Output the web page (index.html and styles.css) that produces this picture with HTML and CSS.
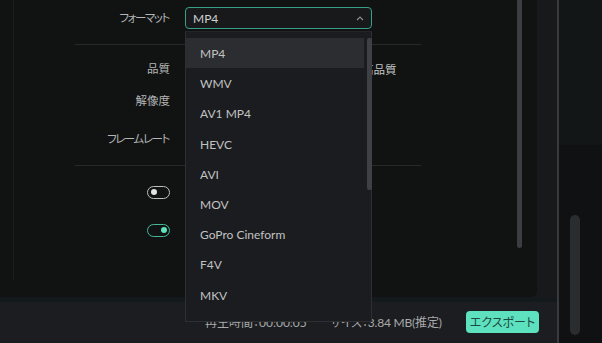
FILE: index.html
```html
<!DOCTYPE html>
<html lang="ja">
<head>
<meta charset="utf-8">
<link rel="stylesheet" href="styles.css">
</head>
<body>
<div class="app">
  <div class="main">
    <div class="panel">
      <div class="guide"></div>
      <div class="form">
        <div class="row row-format">
          <div class="label kana">フォーマット</div>
          <div class="select">
            <span>MP4</span>
            <svg class="chev" width="8" height="5" viewBox="0 0 8 5"><path d="M1 4 L4 1 L7 4" fill="none" stroke="#8a8c8e" stroke-width="1.2"/></svg>
          </div>
        </div>
        <div class="divider d1"></div>
        <div class="row r-quality">
          <div class="label">品質</div>
          <div class="value">高品質</div>
        </div>
        <div class="row r-res">
          <div class="label">解像度</div>
        </div>
        <div class="row r-fps">
          <div class="label kana">フレームレート</div>
        </div>
        <div class="divider d2"></div>
        <div class="row r-t1">
          <div class="label"><span class="toggle off"><i></i></span></div>
        </div>
        <div class="row r-t2">
          <div class="label"><span class="toggle on"><i></i></span></div>
        </div>
      </div>
      <div class="vscroll"></div>
    </div>
    <div class="footer">
      <span class="f-time">再生時間：00:00:05</span>
      <span class="f-size">サイズ：3.84 MB(推定)</span>
      <button class="export">エクスポート</button>
    </div>
    <div class="dropdown">
      <ul>
        <li class="sel">MP4</li>
        <li>WMV</li>
        <li>AV1 MP4</li>
        <li>HEVC</li>
        <li>AVI</li>
        <li>MOV</li>
        <li>GoPro Cineform</li>
        <li>F4V</li>
        <li>MKV</li>
      </ul>
      <div class="dd-scroll"></div>
    </div>
  </div>
  <div class="edge"></div>
  <div class="side">
    <div class="side-top"></div>
    <div class="side-thumb"></div>
  </div>
</div>
</body>
</html>
```
FILE: styles.css
```css
* { box-sizing: border-box; }
html, body { margin: 0; padding: 0; }
body {
  width: 602px;
  height: 343px;
  overflow: hidden;
  background: #111415;
  font-family: Lato, "Noto Sans CJK JP", sans-serif;
  font-feature-settings: "palt";
  font-size: 12px;
  color: #b8b9ba;
}
.app { display: flex; height: 343px; }
.main {
  position: relative;
  width: 557px;
  display: flex;
  flex-direction: column;
  background: #17191a;
}
.panel {
  position: relative;
  width: 537px;
  height: 297px;
  background: #111313;
  border-bottom-right-radius: 6px;
}
.guide {
  position: absolute;
  left: 13px;
  top: 0;
  width: 1px;
  height: 280px;
  background: #1a1c1d;
}
.form { padding-top: 4px; }
.row { display: flex; align-items: center; height: 28px; }
.label {
  width: 170px;
  text-align: right;
  color: #b4b5b6;
  font-size: 11.5px;
  line-height: 1;
  display: flex;
  justify-content: flex-end;
  align-items: center;
}
.label.kana { letter-spacing: -1.4px; padding-right: 1px; }
.select {
  margin-left: 15px;
  width: 187px;
  height: 22px;
  border: 1px solid #3a9f87;
  border-radius: 4px;
  background: #17191b;
  display: flex;
  align-items: center;
  justify-content: space-between;
  padding: 0 7px 0 7px;
  color: #cfd0d1;
}
.chev { display: block; }
.divider { margin-left: 75px; width: 346px; height: 1px; background: #26282a; }
.d1 { margin-top: 12px; }
.r-quality { margin-top: 10px; }
.value { margin-left: 192px; color: #c4c5c6; font-size: 11.5px; }
.r-res { margin-top: 4px; }
.r-fps { margin-top: 10px; }
.d2 { margin-top: 12px; }
.r-t1 { margin-top: 12px; }
.r-t2 { margin-top: 10px; }
.toggle {
  position: relative;
  display: block;
  width: 23px;
  height: 13px;
  border-radius: 7px;
  border: 1.5px solid #bdbebf;
}
.toggle i {
  position: absolute;
  top: 2px;
  width: 6px;
  height: 6px;
  border-radius: 50%;
}
.toggle.off i { left: 2.5px; background: #e2e3e4; }
.toggle.on { border-color: #45b89a; }
.toggle.on i { right: 2.5px; background: #5fe3bf; }
.vscroll {
  position: absolute;
  left: 517px;
  top: 0;
  width: 5px;
  height: 248px;
  background: #3a3e41;
  border-radius: 0 0 3px 3px;
}
.footer {
  flex: 1;
  display: flex;
  align-items: center;
  background: #1c1d20;
  border-top: 5px solid #14191b;
  padding-left: 205px;
  padding-bottom: 2px;
  color: #a9aaab;
}
.f-time { width: 125px; }
.f-size { letter-spacing: -0.2px; }
.export {
  margin-left: auto;
  margin-right: 18px;
  width: 73px;
  height: 22px;
  border: 0;
  border-radius: 4px;
  background: #5de1bf;
  color: #1d4a40;
  font-family: "Noto Sans CJK JP", sans-serif;
  font-feature-settings: "palt";
  font-size: 12px;
  padding: 0;
}
.dropdown {
  position: absolute;
  left: 185px;
  top: 31px;
  width: 187px;
  height: 291px;
  background: #1b1c1f;
  border: 1px solid #2d2f32;
  border-top-color: #232527;
  z-index: 5;
}
.dropdown ul { list-style: none; margin: 0; padding: 6px 0 0 0; }
.dropdown li {
  width: 178px;
  height: 30.2px;
  line-height: 31px;
  padding-left: 14px;
  color: #c1c2c3;
}
.dropdown li.sel { background: #2b2d30; }
.dd-scroll {
  position: absolute;
  left: 181px;
  top: 6px;
  width: 5px;
  height: 152px;
  background: #3d4145;
  border-radius: 2px;
}
.edge { width: 2px; background: #373b3d; }
.side {
  position: relative;
  flex: 1;
  background: #0f1112;
}
.side-top { height: 145px; background: #131617; }
.side-thumb {
  position: absolute;
  left: 11px;
  top: 215px;
  width: 10px;
  height: 120px;
  border-radius: 5px;
  background: #2a2d30;
}
```
